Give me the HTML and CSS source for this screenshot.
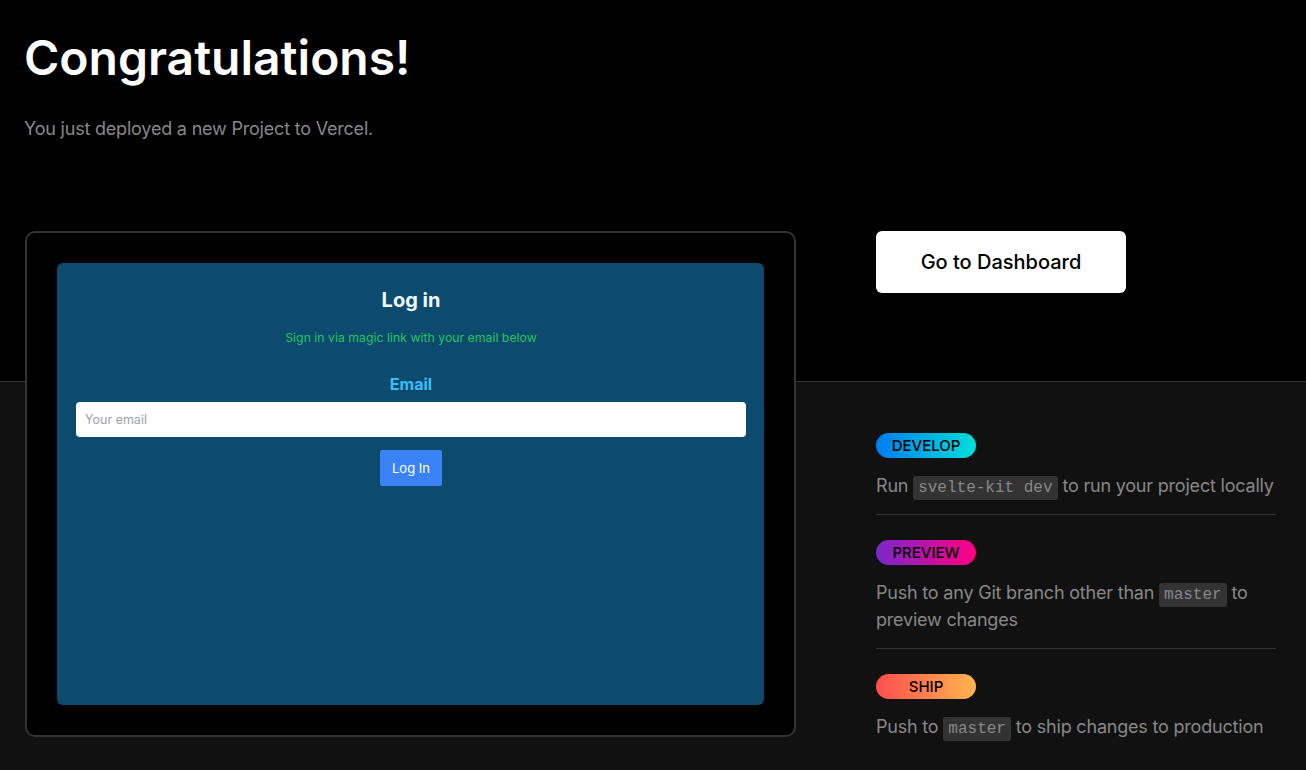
FILE: index.html
```html
<!DOCTYPE html>
<html lang="en">
<head>
<meta charset="utf-8">
<title>Congratulations!</title>
<link rel="stylesheet" href="styles.css">
</head>
<body>
<header class="hero">
  <h1 class="hero-title">Congratulations!</h1>
  <p class="hero-sub">You just deployed a new Project to Vercel.</p>
</header>
<main class="deploy">
  <div class="frame">
    <div class="preview">
      <h2 class="preview-title">Log in</h2>
      <p class="preview-desc">Sign in via magic link with your email below</p>
      <label class="preview-label" for="email">Email</label>
      <div class="preview-input" id="email">Your email</div>
      <div class="preview-btn">Log In</div>
    </div>
  </div>
  <aside class="side">
    <a class="dash-btn" href="#">Go to Dashboard</a>
    <ul class="steps">
      <li class="step">
        <span class="badge badge-develop">DEVELOP</span>
        <p class="step-text">Run <code class="code">svelte-kit dev</code> to run your project locally</p>
      </li>
      <li class="step">
        <span class="badge badge-preview">PREVIEW</span>
        <p class="step-text">Push to any Git branch other than <code class="code">master</code> to preview changes</p>
      </li>
      <li class="step">
        <span class="badge badge-ship">SHIP</span>
        <p class="step-text">Push to <code class="code">master</code> to ship changes to production</p>
      </li>
    </ul>
  </aside>
</main>
</body>
</html>
```

FILE: styles.css
```css
* { box-sizing: border-box; }
html { background: #111; }
body {
  margin: 0;
  background: #000;
  font-family: Inter, "Noto Sans", "Liberation Sans", sans-serif;
  color: #fff;
}
.hero {
  padding: 24px 24px 0;
  height: 231px;
}
.hero-title {
  margin: 0;
  font-size: 48px;
  font-weight: 600;
  line-height: 68px;
}
.hero-sub {
  margin: 25px 0 0;
  font-size: 18px;
  color: #888;
  line-height: 24px;
  letter-spacing: -0.2px;
}
.deploy {
  display: grid;
  grid-template-columns: 771px 400px;
  column-gap: 80px;
  padding: 0 0 34px 25px;
  background: linear-gradient(to bottom, #000 0, #000 150px, #333 150px, #333 151px, #111 151px);
}
.frame {
  border: 2px solid #333;
  border-radius: 10px;
  background: #000;
  padding: 30px;
  height: 506px;
}
.preview {
  height: 100%;
  background: #0c4a6e;
  border-radius: 6px;
  padding: 24px 18px 0 19px;
  display: flex;
  flex-direction: column;
  align-items: center;
  font-family: Inter, "Liberation Sans", sans-serif;
}
.preview-title {
  margin: 0;
  font-size: 20px;
  font-weight: 700;
  line-height: 26px;
  color: #f0f9ff;
}
.preview-desc {
  margin: 17px 0 0;
  font-size: 12.3px;
  line-height: 16px;
  color: #22c55e;
}
.preview-label {
  margin-top: 27px;
  font-size: 16px;
  font-weight: 700;
  line-height: 22px;
  color: #38bdf8;
}
.preview-input {
  margin-top: 7px;
  align-self: stretch;
  height: 35px;
  background: #fff;
  border-radius: 4px;
  padding: 0 9px;
  display: flex;
  align-items: center;
  font-size: 12.5px;
  color: #9ca3af;
}
.preview-btn {
  margin-top: 13px;
  width: 62px;
  height: 36px;
  background: #3b82f6;
  border-radius: 2px;
  color: #fff;
  font-size: 13px;
  display: flex;
  align-items: center;
  justify-content: center;
}
.side {
  display: flex;
  flex-direction: column;
  align-items: flex-start;
}
.dash-btn {
  display: flex;
  align-items: center;
  justify-content: center;
  width: 250px;
  height: 62px;
  background: #fff;
  border-radius: 6px;
  color: #000;
  font-size: 20px;
  font-weight: 500;
  text-decoration: none;
}
.steps {
  list-style: none;
  margin: 140px 0 0;
  padding: 0;
  width: 400px;
}
.step {
  padding: 25px 0 15px;
  border-bottom: 1px solid #333;
}
.step:first-child { padding-top: 0; }
.step:last-child { border-bottom: none; }
.badge {
  display: flex;
  align-items: center;
  justify-content: center;
  width: 100px;
  height: 25px;
  border-radius: 13px;
  color: #000;
  font-size: 15px;
  font-weight: 500;
}
.badge-develop { background: linear-gradient(90deg, #007cf0, #00dfd8); }
.badge-preview { background: linear-gradient(90deg, #7928ca, #ff0080); }
.badge-ship { background: linear-gradient(90deg, #ff4d4d, #ffb54d); }
.step-text {
  margin: 14px 0 0;
  font-size: 18px;
  line-height: 27px;
  color: #888;
  letter-spacing: -0.2px;
}
.code {
  font-family: "Liberation Mono", "DejaVu Sans Mono", monospace;
  font-size: 16px;
  line-height: 1;
  letter-spacing: 0;
  background: #333;
  color: #888;
  padding: 3px 5px;
  border-radius: 3px;
}
```
